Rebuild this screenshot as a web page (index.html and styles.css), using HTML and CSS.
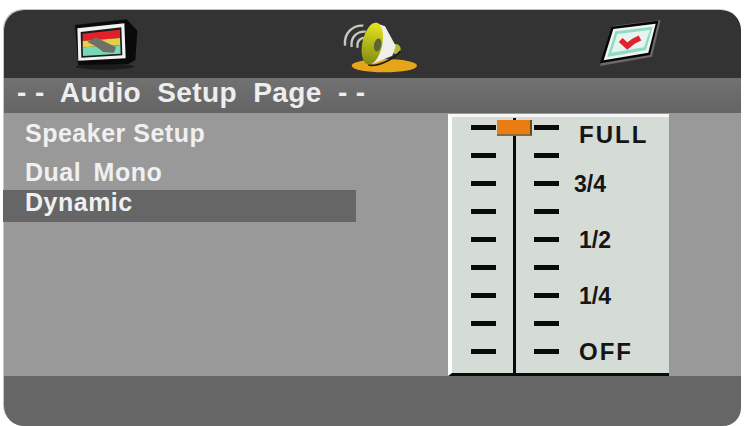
FILE: index.html
```html
<!DOCTYPE html>
<html lang="en">

<head>
    <meta charset="UTF-8">
    <meta name="viewport" content="width=device-width, initial-scale=1.0">
    <title>Audio Setup Page</title>
    <link rel="stylesheet" href="styles.css">
</head>

<body>
    <div class="screen">
        <div class="iconBar">
            <svg class="icon tvIcon" viewBox="0 0 270 195" width="90" height="65">
                <ellipse cx="135" cy="170" rx="88" ry="9" fill="#1c1c1c" />
                <polygon points="45,45 200,28 232,62 226,150 205,162 55,165" fill="#0a0a0a" />
                <polygon points="52,55 193,40 197,145 55,152" fill="#f2f2f2" />
                <polygon points="62,66 184,52 187,136 64,143" fill="#1a1a1a" />
                <polygon points="68,71 180,59 180,84 68,93" fill="#e3202a" />
                <polygon points="68,93 180,84 181,106 68,112" fill="#e6d04a" />
                <polygon points="68,112 181,106 182,131 69,138" fill="#76d8b4" />
                <polygon points="82,96 108,82 168,112 162,128 130,126 106,108" fill="#6f7066" />
            </svg>
            <svg class="icon speakerIcon" viewBox="0 0 270 189" width="90" height="63">
                <defs>
                    <linearGradient id="hornFill" x1="0" y1="0" x2="0" y2="1">
                        <stop offset="0" stop-color="#e8e620" />
                        <stop offset="1" stop-color="#7f8a14" />
                    </linearGradient>
                </defs>
                <ellipse cx="148" cy="152" rx="98" ry="20" fill="#e6a51a" />
                <g fill="none" stroke="#c4cabf" stroke-width="7">
                    <path d="M85 32 C55 30 26 52 30 92" />
                    <path d="M92 50 C68 48 46 64 50 96" />
                    <path d="M94 68 C78 66 64 78 68 98" />
                </g>
                <circle cx="182" cy="102" r="15" fill="#b8b83c" />
                <polygon points="122,24 150,34 182,92 172,122 104,150" fill="#f0f0ea" />
                <ellipse cx="112" cy="86" rx="30" ry="64" transform="rotate(12 112 86)" fill="url(#hornFill)" />
                <ellipse cx="128" cy="90" rx="11" ry="20" transform="rotate(12 128 90)" fill="#5b6630" />
                <path d="M100 150 C124 156 174 136 196 108" fill="none" stroke="#1c1c10" stroke-width="5" />
            </svg>
            <svg class="icon chartIcon" viewBox="0 0 270 195" width="90" height="65">
                <polygon points="68,48 212,30 186,140 30,168" fill="#6a6a6a" />
                <polygon points="65,50 205,32 180,135 30,160" fill="#050505" />
                <polygon points="70,57 197,41 175,128 41,151" fill="#f2f5ef" />
                <polygon points="76,64 188,50 168,121 52,141" fill="#8fdcc8" />
                <polygon points="82,72 180,60 162,112 64,128" fill="#e4f5ee" />
                <polyline points="92,90 112,108 130,94 150,84" fill="none" stroke="#df2430" stroke-width="17" />
            </svg>
        </div>
        <div class="titleBar"><span class="dashes">- -</span> Audio Setup Page <span class="dashes">- -</span></div>
        <div class="content">
            <div class="menu">
                <div class="menuItem speaker">Speaker Setup</div>
                <div class="menuItem dual">Dual Mono</div>
                <div class="menuItem selected">Dynamic</div>
            </div>
            <div class="slider">
                <div class="rail"></div>
                <div class="thumb"></div>
                <div class="step"><span class="tick"></span><span class="tick"></span><span class="label word full">FULL</span></div>
                <div class="step"><span class="tick"></span><span class="tick"></span></div>
                <div class="step"><span class="tick"></span><span class="tick"></span><span class="label nudged">3/4</span></div>
                <div class="step"><span class="tick"></span><span class="tick"></span></div>
                <div class="step"><span class="tick"></span><span class="tick"></span><span class="label">1/2</span></div>
                <div class="step"><span class="tick"></span><span class="tick"></span></div>
                <div class="step"><span class="tick"></span><span class="tick"></span><span class="label">1/4</span></div>
                <div class="step"><span class="tick"></span><span class="tick"></span></div>
                <div class="step"><span class="tick"></span><span class="tick"></span><span class="label word">OFF</span></div>
            </div>
        </div>
        <div class="footer"></div>
    </div>
</body>

</html>
```

FILE: styles.css
```css
* {
    box-sizing: border-box;
    font-family: "Liberation Sans", Arial, sans-serif;
    font-weight: 700;
}

body {
    margin: 0;
    background-color: #ffffff;
    overflow: hidden;
}

.screen {
    width: 737px;
    height: 416px;
    margin: 10px 0 0 4px;
    border-radius: 20px;
    border-bottom-right-radius: 18px;
    box-shadow: -1px -1px 0 #c4c4c4;
}

.iconBar {
    display: flex;
    height: 68px;
    background-color: #333333;
    border-top-left-radius: 20px;
    border-top-right-radius: 20px;
}

.icon {
    flex: none;
    filter: blur(0.5px);
}

.tvIcon {
    margin-left: 56px;
}

.speakerIcon {
    margin-top: 5px;
    margin-left: 185px;
}

.chartIcon {
    margin-left: 165px;
}

.titleBar {
    height: 35px;
    padding-left: 13px;
    background: linear-gradient(#717171, #646464);
    color: #eeeeee;
    font-size: 28px;
    line-height: 30px;
    letter-spacing: 0.4px;
    word-spacing: 8px;
    white-space: nowrap;
}

.dashes {
    word-spacing: 0;
}

.content {
    display: flex;
    height: 263px;
    background-color: #999999;
}

.menu {
    width: 444px;
    color: #f0f0f0;
    font-size: 25px;
    letter-spacing: 0.5px;
}

.menuItem {
    padding-left: 21px;
}

.speaker {
    margin-top: 6px;
    height: 30px;
    line-height: 28px;
}

.dual {
    margin-top: 9px;
    height: 32px;
    line-height: 28px;
    word-spacing: 5px;
}

.selected {
    width: 353px;
    height: 32px;
    margin-left: -1px;
    padding-left: 22px;
    background-color: #666666;
    line-height: 25px;
}

.slider {
    position: relative;
    width: 221px;
    height: 262px;
    margin-top: 1px;
    padding-left: 19px;
    background-color: #d5dbd5;
    border-top: 3px solid #f6f6f6;
    border-left: 4px solid #ffffff;
    border-bottom: 3px solid #0a0a0a;
    color: #151515;
}

.rail {
    position: absolute;
    left: 61px;
    top: 1px;
    bottom: 0;
    width: 3px;
    background-color: #0a0a0a;
}

.thumb {
    position: absolute;
    left: 45px;
    top: 3px;
    width: 35px;
    height: 16px;
    background-color: #e97c12;
    border-right: 2px solid #6b4a20;
    border-bottom: 2px solid #8a6a3a;
}

.step {
    display: flex;
    align-items: flex-start;
    height: 28px;
}

.tick {
    width: 25px;
    height: 5px;
    margin-top: 8px;
    margin-right: 38px;
    background-color: #0a0a0a;
}

.label {
    margin-left: -18px;
    font-size: 23px;
    line-height: 22px;
}

.word {
    font-size: 24px;
    letter-spacing: 2px;
}

.full {
    margin-top: 7px;
}

.nudged {
    margin-left: -23px;
}

.footer {
    height: 50px;
    background-color: #666666;
    border-bottom-left-radius: 20px;
    border-bottom-right-radius: 18px;
}
```
